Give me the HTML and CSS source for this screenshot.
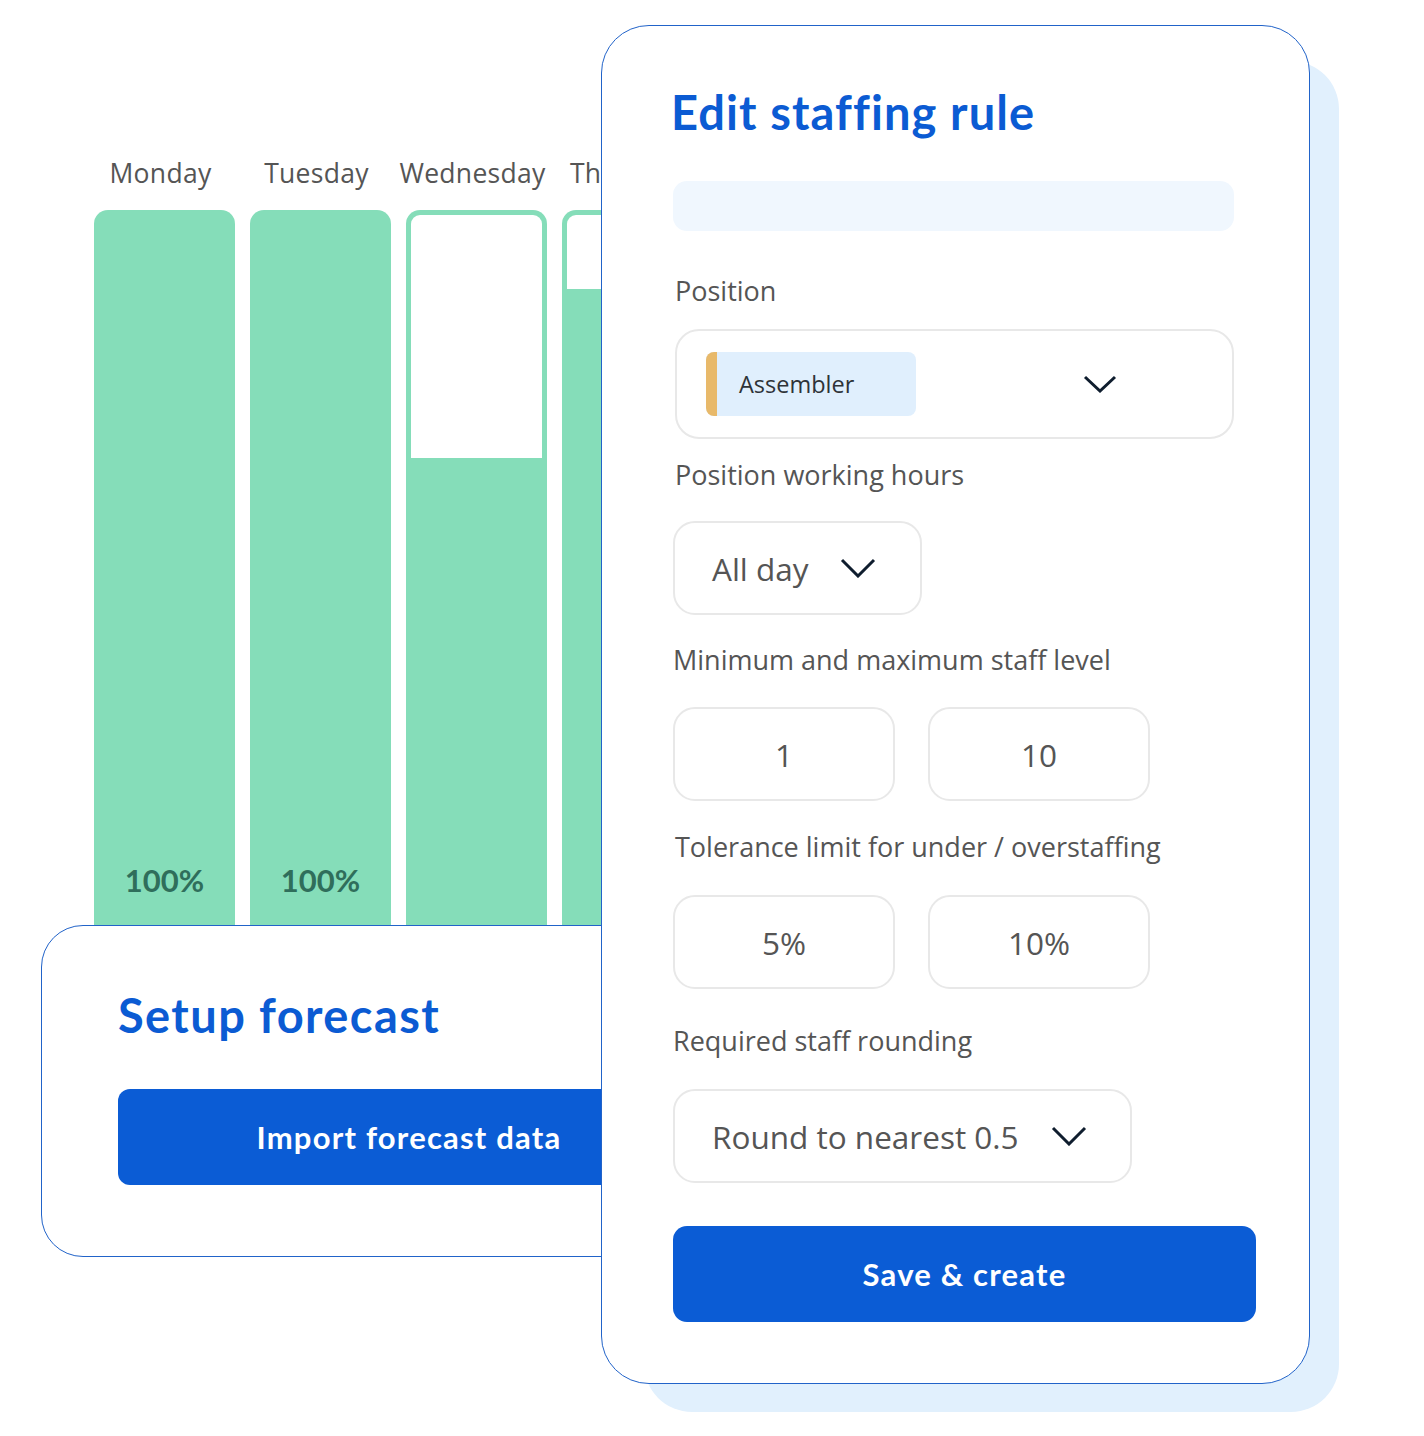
FILE: index.html
```html
<!DOCTYPE html>
<html lang="en">
<head>
<meta charset="utf-8">
<title>Edit staffing rule</title>
<link rel="stylesheet" href="styles.css">
</head>
<body>
<div class="stage">
  <div class="chart">
    <div class="day">
      <div class="day-label">Monday</div>
      <div class="bar bar-full"><span class="pct">100%</span></div>
    </div>
    <div class="day">
      <div class="day-label">Tuesday</div>
      <div class="bar bar-full"><span class="pct">100%</span></div>
    </div>
    <div class="day">
      <div class="day-label">Wednesday</div>
      <div class="bar bar-part"><div class="bar-empty" style="height:243px"></div></div>
    </div>
    <div class="day">
      <div class="day-label">Thursday</div>
      <div class="bar bar-part"><div class="bar-empty" style="height:74px"></div></div>
    </div>
  </div>

  <div class="setup-card">
    <h2 class="card-title">Setup forecast</h2>
    <button class="btn btn-import">Import forecast data</button>
  </div>

  <div class="edit-card">
    <h1 class="card-title card-title-edit">Edit staffing rule</h1>
    <div class="placeholder-bar"></div>

    <div class="label label-position">Position</div>
    <div class="select select-position">
      <div class="chip"><span class="chip-stripe"></span><span class="chip-text">Assembler</span></div>
      <svg class="chev chev-sm" viewBox="0 0 34 18" width="34" height="18"><path d="M2 2 L17 16 L32 2" fill="none" stroke="#0f1d2e" stroke-width="3"/></svg>
    </div>

    <div class="label label-hours">Position working hours</div>
    <div class="field field-allday">
      <span>All day</span>
      <svg class="chev" viewBox="0 0 36 20" width="36" height="20"><path d="M2 2 L18 18 L34 2" fill="none" stroke="#0f1d2e" stroke-width="3"/></svg>
    </div>

    <div class="label label-level">Minimum and maximum staff level</div>
    <div class="pair">
      <div class="field field-num">1</div>
      <div class="field field-num">10</div>
    </div>

    <div class="label label-tol">Tolerance limit for under / overstaffing</div>
    <div class="pair">
      <div class="field field-num">5%</div>
      <div class="field field-num">10%</div>
    </div>

    <div class="label label-round">Required staff rounding</div>
    <div class="field field-round">
      <span>Round to nearest 0.5</span>
      <svg class="chev" viewBox="0 0 36 20" width="36" height="20"><path d="M2 2 L18 18 L34 2" fill="none" stroke="#0f1d2e" stroke-width="3"/></svg>
    </div>

    <button class="btn btn-save">Save &amp; create</button>
  </div>
</div>
</body>
</html>
```

FILE: styles.css
```css
* { box-sizing: border-box; }

html, body {
  margin: 0;
  padding: 0;
  background: #ffffff;
}

body {
  font-family: "Open Sans", "DejaVu Sans", sans-serif;
  color: #555555;
}

.stage {
  position: relative;
  z-index: 0;
  width: 1424px;
  height: 1436px;
  overflow: hidden;
  background: #ffffff;
}

/* ---------- chart ---------- */
.chart {
  position: absolute;
  left: 94px;
  top: 155px;
  display: flex;
  gap: 15px;
}

.day {
  width: 141px;
  display: flex;
  flex-direction: column;
  align-items: center;
}

.day-label {
  font-size: 26.5px;
  line-height: 36px;
  color: #555555;
  white-space: nowrap;
  margin-left: -8px;
  letter-spacing: 0.3px;
}

.bar {
  margin-top: 19px;
  width: 141px;
  height: 790px;
  border-radius: 14px 14px 0 0;
  background: #85ddb9;
  display: flex;
  flex-direction: column;
  align-items: center;
}

.bar-part {
  padding: 5px 5px 0;
}

.bar-empty {
  width: 100%;
  background: #ffffff;
  border-radius: 9px 9px 0 0;
}

.pct {
  margin-top: 650px;
  font-family: "Lato", "Open Sans", sans-serif;
  font-weight: 700;
  font-size: 31px;
  line-height: 40px;
  color: #2f6e5b;
}

/* ---------- shared ---------- */
.card-title {
  margin: 0;
  font-family: "Lato", "Open Sans", sans-serif;
  font-weight: 700;
  font-size: 47px;
  line-height: 56px;
  color: #0b5bd3;
  letter-spacing: 1.4px;
}

.card-title-edit {
  margin-left: -2px;
  letter-spacing: 1.1px;
}

.btn {
  display: block;
  border: 0;
  background: #0b5cd5;
  color: #ffffff;
  font-family: "Lato", "Open Sans", sans-serif;
  font-weight: 700;
  font-size: 31px;
  letter-spacing: 1.2px;
  height: 96px;
  padding: 0;
  text-align: center;
}

/* ---------- setup card ---------- */
.setup-card {
  position: absolute;
  left: 41px;
  top: 925px;
  width: 800px;
  height: 332px;
  background: #ffffff;
  border: 1.5px solid #2163c9;
  border-radius: 42px;
  padding: 61px 0 0 76px;
}

.btn-import {
  margin-top: 46px;
  width: 582px;
  border-radius: 12px;
}

/* ---------- edit card ---------- */
.edit-card {
  position: absolute;
  left: 601px;
  top: 25px;
  width: 709px;
  height: 1359px;
  background: #ffffff;
  border: 1.5px solid #2163c9;
  border-radius: 48px;
  padding: 58px 0 0 71px;
  display: flex;
  flex-direction: column;
  align-items: flex-start;
}

.edit-card::before {
  content: "";
  position: absolute;
  left: 42px;
  top: 35px;
  right: -30px;
  bottom: -29px;
  border-radius: 48px;
  background: #e1f0fd;
  z-index: -1;
}

.placeholder-bar {
  margin-top: 41px;
  width: 561px;
  height: 50px;
  border-radius: 14px;
  background: #f0f7fe;
}

.label {
  font-size: 27px;
  line-height: 30px;
  color: #555555;
  white-space: nowrap;
}

.label-position { margin-top: 45px; margin-left: 2px; }
.label-hours { margin-top: 21px; margin-left: 2px; }
.label-level { margin-top: 30px; }
.label-tol { margin-top: 31px; margin-left: 2px; }
.label-round { margin-top: 37px; }

.select-position {
  margin-top: 23px;
  margin-left: 2px;
  width: 559px;
  height: 110px;
  border: 2px solid #e8e8e8;
  border-radius: 24px;
  display: flex;
  align-items: center;
  padding-left: 29px;
  gap: 167px;
}

.chip {
  width: 210px;
  height: 64px;
  border-radius: 8px;
  background: #e0effd;
  display: flex;
  align-items: center;
  overflow: hidden;
}

.chip-stripe {
  width: 11px;
  height: 100%;
  background: #e8b96a;
}

.chip-text {
  margin-left: 22px;
  font-size: 23.5px;
  color: #2e3338;
}

.chev { display: block; }
.chev-sm { width: 34px; height: 18px; }

.field {
  height: 94px;
  border: 2px solid #e8e8e8;
  border-radius: 22px;
  font-size: 31.5px;
  color: #555555;
  display: flex;
  align-items: center;
}

.field-allday {
  margin-top: 31px;
  width: 249px;
  padding-left: 37px;
  gap: 31px;
}

.field-round {
  margin-top: 33px;
  width: 459px;
  padding-left: 37px;
  gap: 32px;
}

.pair {
  margin-top: 32px;
  display: flex;
  gap: 33px;
}

.label-tol + .pair { margin-top: 33px; }

.field-num {
  width: 222px;
  justify-content: center;
}

.btn-save {
  margin-top: 43px;
  width: 583px;
  border-radius: 14px;
}
```
